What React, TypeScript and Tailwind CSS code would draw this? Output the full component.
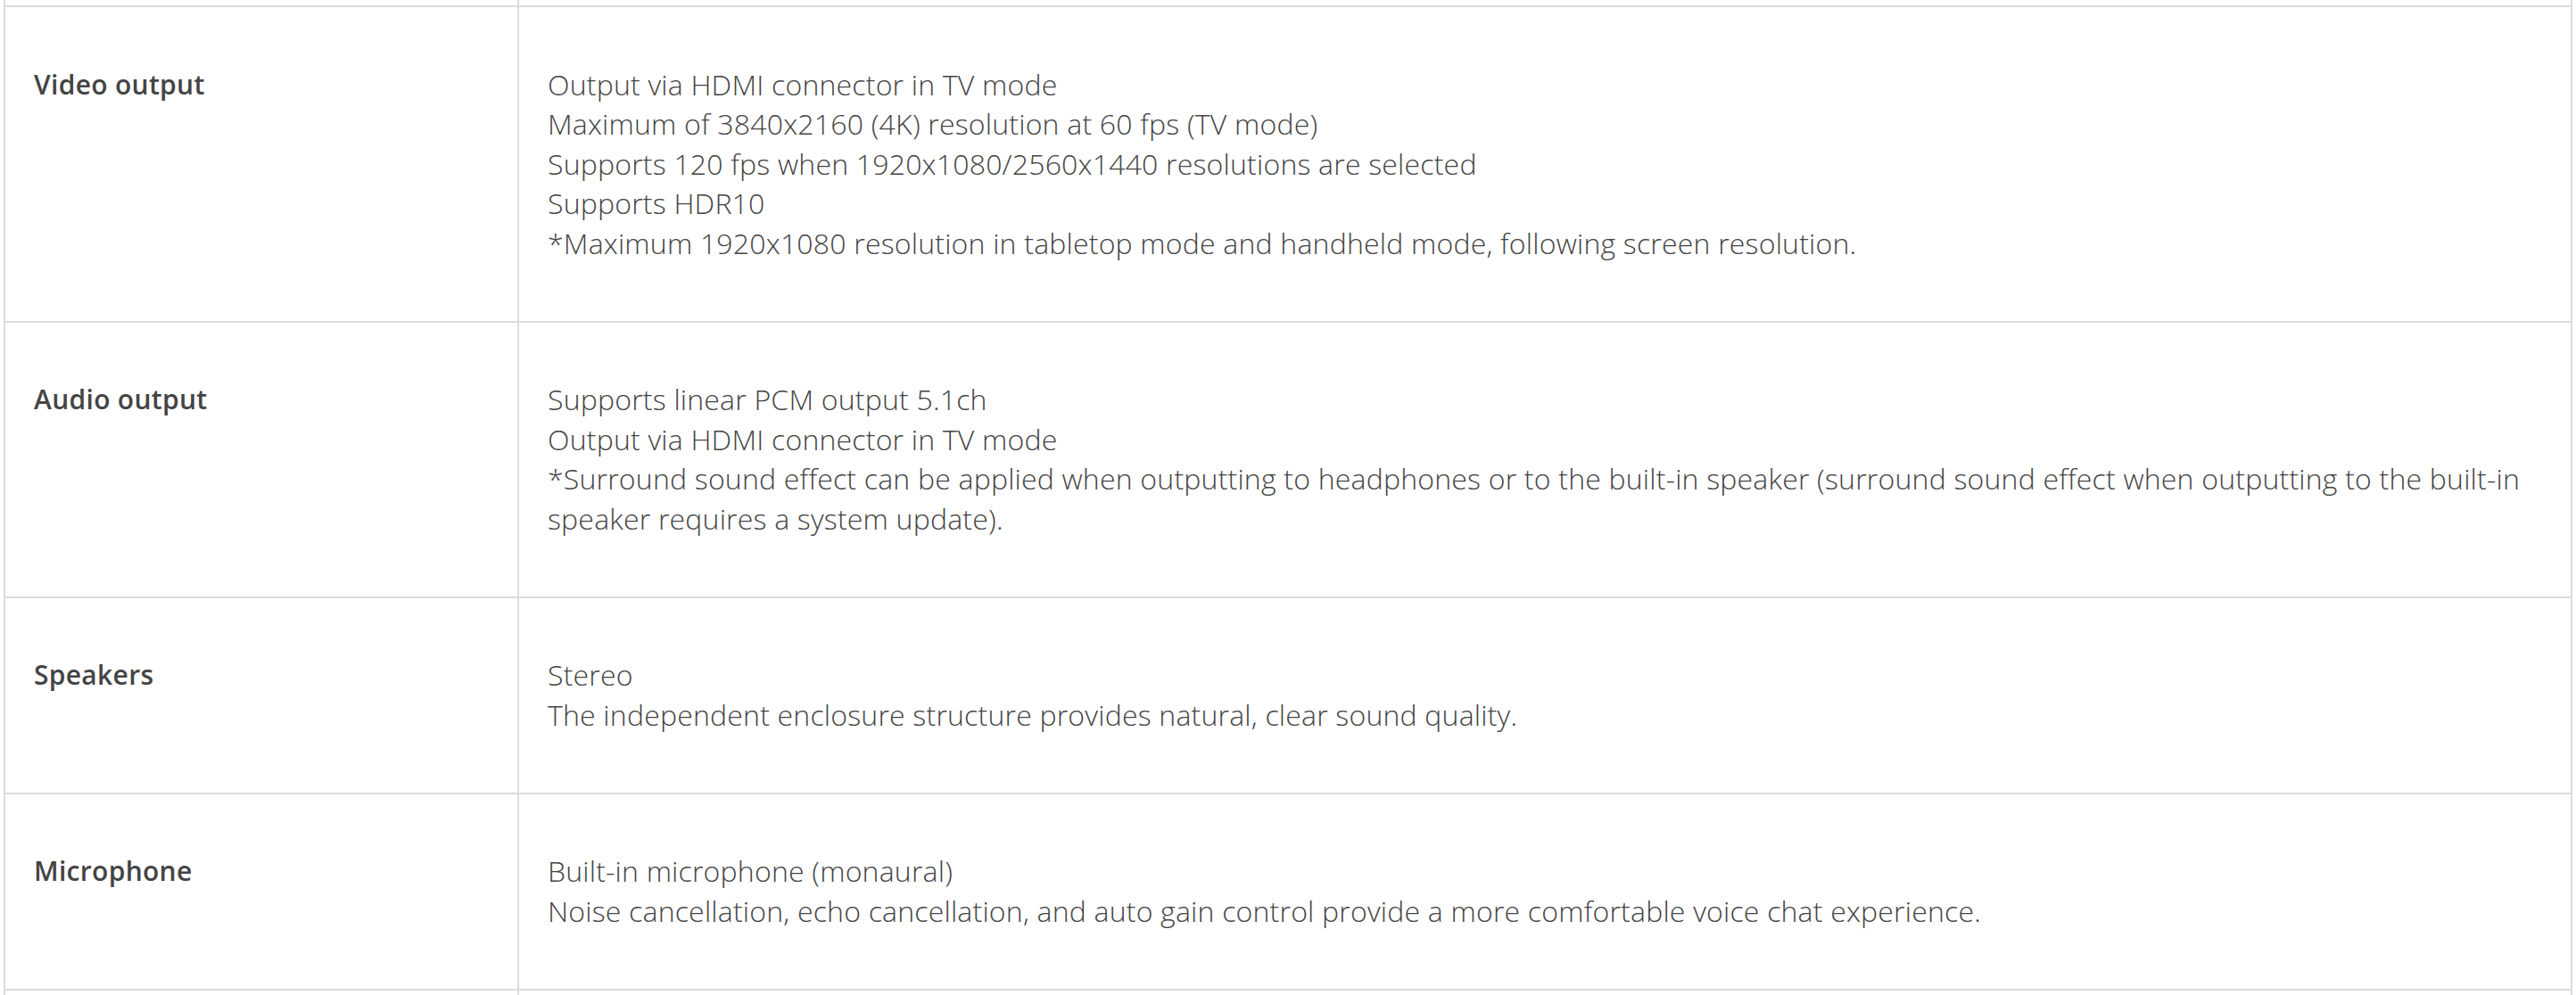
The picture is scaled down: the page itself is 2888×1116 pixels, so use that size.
import React from 'react';

/* Spec rows: label on the left, lines of detail on the right */
const SPECS = [
  {
    label: 'Video output',
    lines: [
      'Output via HDMI connector in TV mode',
      'Maximum of 3840x2160 (4K) resolution at 60 fps (TV mode)',
      'Supports 120 fps when 1920x1080/2560x1440 resolutions are selected',
      'Supports HDR10',
      '*Maximum 1920x1080 resolution in tabletop mode and handheld mode, following screen resolution.',
    ],
  },
  {
    label: 'Audio output',
    lines: [
      'Supports linear PCM output 5.1ch',
      'Output via HDMI connector in TV mode',
      '*Surround sound effect can be applied when outputting to headphones or to the built-in speaker (surround sound effect when outputting to the built-in speaker requires a system update).',
    ],
  },
  {
    label: 'Speakers',
    lines: ['Stereo', 'The independent enclosure structure provides natural, clear sound quality.'],
  },
  {
    label: 'Microphone',
    lines: [
      'Built-in microphone (monaural)',
      'Noise cancellation, echo cancellation, and auto gain control provide a more comfortable voice chat experience.',
    ],
  },
];

function SpecRow({ label, lines }: { label: string; lines: string[] }) {
  return (
    <div className="grid grid-cols-[576px_1fr] border-t-2 border-[#dcdcdc]">
      <div className="border-r-2 border-[#dcdcdc] px-8 py-[64.5px]">
        <p className="text-[30px] font-semibold leading-[44.5px] tracking-[0.3px] text-[#444]">{label}</p>
      </div>
      <div className="px-8 py-[64.5px]">
        {lines.map((line) => (
          <p key={line} className="text-[32px] font-light leading-[44.5px] tracking-[0.2px] text-[#444]">
            {line}
          </p>
        ))}
      </div>
    </div>
  );
}

export default function App() {
  return (
    <div className="h-[1116px] overflow-hidden bg-white px-1 font-['Open_Sans','Liberation_Sans',sans-serif]">
      <div className="border-x-2 border-[#dcdcdc]">
        {/* tail of the row above, scrolled out of view */}
        <div className="grid h-[6px] grid-cols-[576px_1fr]">
          <div className="border-r-2 border-[#dcdcdc]" />
          <div />
        </div>

        {SPECS.map((spec) => (
          <SpecRow key={spec.label} label={spec.label} lines={spec.lines} />
        ))}

        {/* head of the next row */}
        <div className="grid h-[40px] grid-cols-[576px_1fr] border-t-2 border-[#dcdcdc]">
          <div className="border-r-2 border-[#dcdcdc]" />
          <div />
        </div>
      </div>
    </div>
  );
}
